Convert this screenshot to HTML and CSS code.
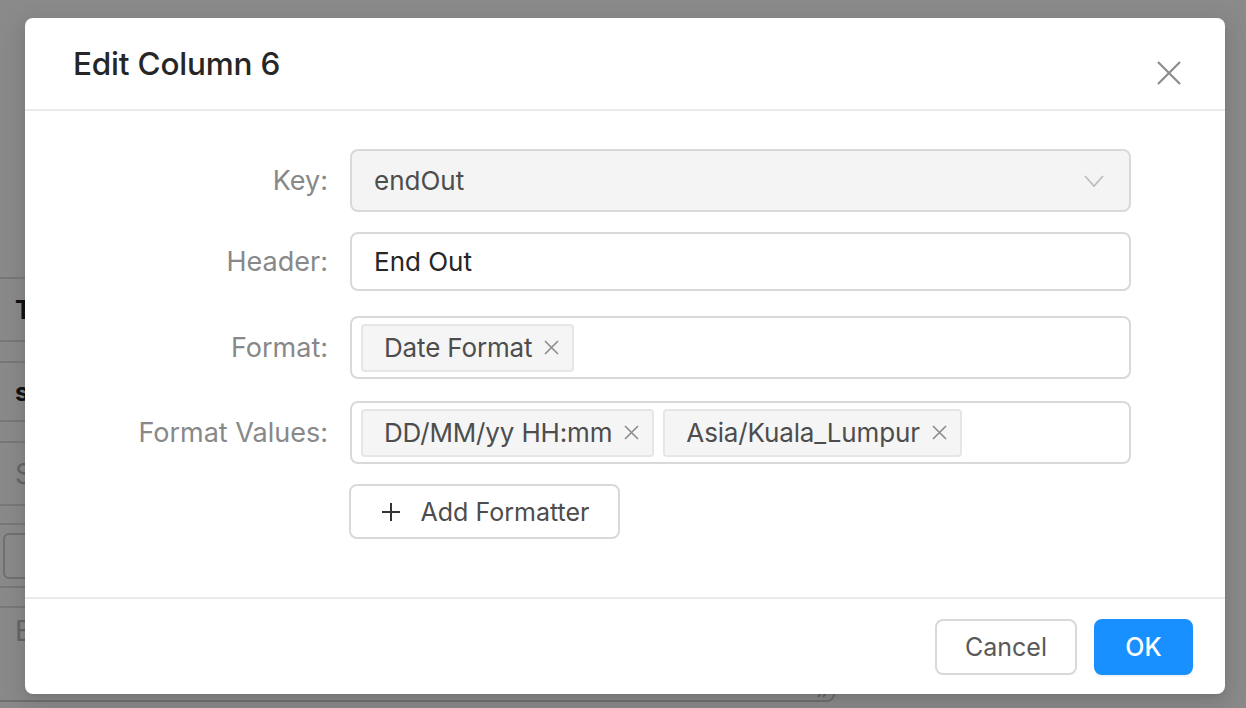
FILE: index.html
```html
<!DOCTYPE html>
<html>
<head>
<meta charset="utf-8">
<link rel="stylesheet" href="styles.css">
</head>
<body>
<div class="page">
  <div class="bg-content">
    <div class="card card-a"><span class="bg-title">T</span></div>
    <div class="card card-b"><span class="bg-sub">s</span></div>
    <div class="card card-c"><span class="bg-ph">S</span></div>
    <div class="card card-d"><div class="bg-box"></div></div>
    <div class="card card-e">
      <span class="bg-ph">E</span>
      <div class="bg-textarea">
        <svg class="grip" width="14" height="12" viewBox="0 0 14 12"><path d="M3 11 L9 3 M8 11 L13 4" stroke="#bbb" stroke-width="2" fill="none"/></svg>
      </div>
    </div>
  </div>
  <div class="mask"></div>
  <div class="modal">
    <div class="modal-header">
      <div class="modal-title">Edit Column 6</div>
      <svg class="close-icon" width="24" height="24" viewBox="0 0 24 24"><path d="M1 1 L23 23 M23 1 L1 23" stroke="#8c8c8c" stroke-width="2.2" fill="none"/></svg>
    </div>
    <div class="modal-body">
      <div class="form-row row-1">
        <label class="form-label">Key:</label>
        <div class="control select">
          <span class="select-value">endOut</span>
          <svg class="chevron" width="20" height="12" viewBox="0 0 20 12"><path d="M1 1 L10 11 L19 1" stroke="#bdbdbd" stroke-width="1.8" fill="none"/></svg>
        </div>
      </div>
      <div class="form-row row-2">
        <label class="form-label">Header:</label>
        <div class="control input"><span class="input-value">End Out</span></div>
      </div>
      <div class="form-row row-3">
        <label class="form-label">Format:</label>
        <div class="control tags">
          <span class="tag">Date Format<svg class="tag-x" width="15" height="15" viewBox="0 0 15 15"><path d="M1 1 L14 14 M14 1 L1 14" stroke="#8c8c8c" stroke-width="1.6" fill="none"/></svg></span>
        </div>
      </div>
      <div class="form-row row-4">
        <label class="form-label">Format Values:</label>
        <div class="control tags">
          <span class="tag">DD/MM/yy HH:mm<svg class="tag-x" width="15" height="15" viewBox="0 0 15 15"><path d="M1 1 L14 14 M14 1 L1 14" stroke="#8c8c8c" stroke-width="1.6" fill="none"/></svg></span>
          <span class="tag">Asia/Kuala_Lumpur<svg class="tag-x" width="15" height="15" viewBox="0 0 15 15"><path d="M1 1 L14 14 M14 1 L1 14" stroke="#8c8c8c" stroke-width="1.6" fill="none"/></svg></span>
        </div>
      </div>
      <div class="form-row row-5">
        <span class="form-label"></span>
        <button class="btn btn-add"><svg class="plus" width="18" height="18" viewBox="0 0 18 18"><path d="M9 0 V18 M0 9 H18" stroke="#333" stroke-width="2" fill="none"/></svg>Add Formatter</button>
      </div>
    </div>
    <div class="modal-footer">
      <button class="btn btn-cancel">Cancel</button>
      <button class="btn btn-ok">OK</button>
    </div>
  </div>
</div>
</body>
</html>
```

FILE: styles.css
```css
* { box-sizing: border-box; }
html, body { margin: 0; padding: 0; }
body {
  width: 1246px;
  height: 708px;
  overflow: hidden;
  background: #fff;
  font-family: Inter, "Noto Sans", sans-serif;
}
.page {
  position: relative;
  width: 1246px;
  height: 708px;
  overflow: hidden;
}

/* background page */
.bg-content {
  display: flex;
  flex-direction: column;
  padding-top: 277px;
  margin-left: -20px;
  width: 900px;
}
.card {
  border-top: 2px solid #dedede;
  border-bottom: 2px solid #dedede;
  display: flex;
  align-items: center;
  padding-left: 35px;
}
.card-a { height: 65px; margin-bottom: 19px; }
.card-b { height: 61px; margin-bottom: 19px; }
.card-c { height: 65px; margin-bottom: 17px; }
.card-d { height: 65px; margin-bottom: 18px; padding-left: 23px; }
.card-e { height: 120px; align-items: flex-start; flex-direction: column; border-bottom: none; }
.bg-title { font-weight: 700; font-size: 25px; color: #222; }
.bg-sub { font-weight: 700; font-size: 25px; color: #222; }
.bg-ph { font-size: 28px; color: #bdbdbd; }
.card-e .bg-ph { margin-top: 6px; }
.bg-box {
  width: 300px;
  height: 46px;
  border: 2px solid #d0d0d0;
  border-radius: 6px;
}
.bg-textarea {
  position: relative;
  margin-left: -35px;
  width: 855px;
  height: 40px;
  margin-top: 14px;
  border-bottom: 2px solid #cfcfcf;
  border-right: 2px solid #cfcfcf;
  border-bottom-right-radius: 8px;
}
.grip { position: absolute; right: 4px; bottom: 2px; }

.mask {
  position: absolute;
  inset: 0;
  background: rgba(0, 0, 0, 0.46);
}

/* modal */
.modal {
  position: absolute;
  left: 25px;
  top: 18px;
  width: 1200px;
  height: 676px;
  background: #fff;
  border-radius: 8px;
  box-shadow: 0 6px 16px rgba(0,0,0,.08), 0 3px 6px -4px rgba(0,0,0,.12), 0 9px 28px 8px rgba(0,0,0,.05);
  display: flex;
  flex-direction: column;
}
.modal-header {
  height: 93px;
  border-bottom: 2px solid #ebebeb;
  display: flex;
  align-items: center;
  justify-content: space-between;
  padding: 0 44px 0 48px;
}
.modal-title {
  font-size: 31.5px;
  font-weight: 500;
  color: #262626;
  letter-spacing: -0.2px;
}
.close-icon { margin-top: 18px; }

.modal-body {
  flex: 1;
  padding-top: 38px;
  display: flex;
  flex-direction: column;
}
.form-row {
  display: flex;
  align-items: center;
}
.form-label {
  width: 303px;
  text-align: right;
  font-size: 27px;
  color: #888;
  margin-right: 22px;
  flex: none;
}
.row-1 { height: 63px; margin-bottom: 20px; }
.row-2 { height: 59px; margin-bottom: 25px; }
.row-3 { height: 63px; margin-bottom: 22px; }
.row-4 { height: 63px; margin-bottom: 20px; }
.row-5 { height: 55px; }

.control {
  width: 781px;
  height: 100%;
  border: 2px solid #d9d9d9;
  border-radius: 8px;
  display: flex;
  align-items: center;
}
.select {
  background: #f4f4f4;
  justify-content: space-between;
  padding: 0 25px 0 22px;
}
.select-value { font-size: 26px; color: #4d4d4d; }
.input { padding: 0 22px; }
.input-value { font-size: 26px; color: #262626; }
.tags {
  padding: 0 9px;
  gap: 9px;
}
.tag {
  height: 48px;
  display: inline-flex;
  align-items: center;
  gap: 12px;
  padding: 0 13px 0 21px;
  background: #f5f5f5;
  border: 2px solid #e6e6e6;
  border-radius: 4px;
  font-size: 26px;
  letter-spacing: -0.15px;
  color: #4d4d4d;
}

.btn {
  font-family: Inter, "Noto Sans", sans-serif;
  font-size: 25px;
  border-radius: 8px;
  cursor: pointer;
  display: inline-flex;
  align-items: center;
  justify-content: center;
}
.btn-add {
  width: 271px;
  height: 55px;
  margin-left: -1px;
  background: #fff;
  border: 2px solid #d9d9d9;
  color: #4d4d4d;
  gap: 21px;
  padding: 0 0 0 2px;
}
.modal-footer {
  height: 97px;
  border-top: 2px solid #ebebeb;
  display: flex;
  justify-content: flex-end;
  align-items: center;
  gap: 17px;
  padding: 0 32px 0 0;
}
.btn-cancel {
  width: 142px;
  height: 56px;
  background: #fff;
  border: 2px solid #d9d9d9;
  color: #595959;
}
.btn-ok {
  width: 99px;
  height: 56px;
  background: #1890ff;
  border: 2px solid #1890ff;
  color: #fff;
  font-weight: 500;
  box-shadow: 0 2px 0 rgba(0,0,0,.045);
}
```
